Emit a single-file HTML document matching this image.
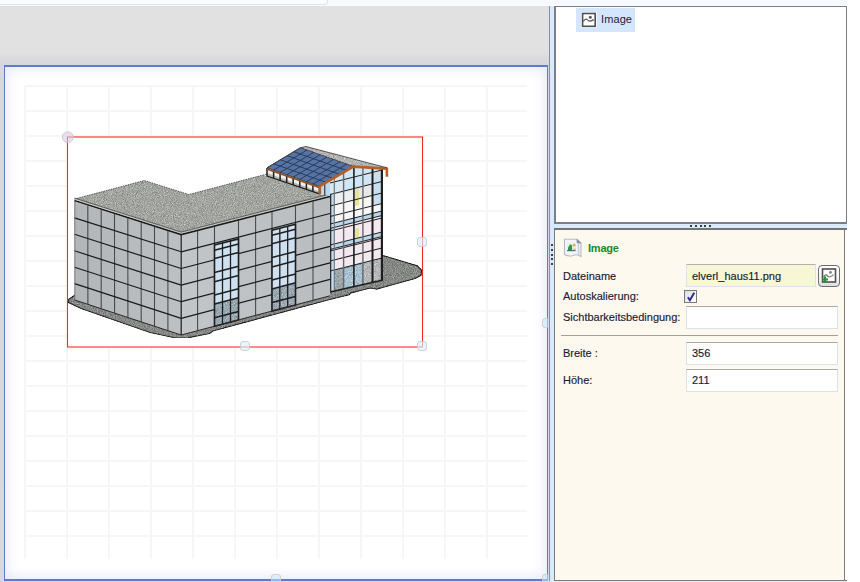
<!DOCTYPE html>
<html><head><meta charset="utf-8">
<style>
*{margin:0;padding:0;box-sizing:border-box}
html,body{width:860px;height:582px;overflow:hidden;background:#fff;font-family:"Liberation Sans",sans-serif;}
.a{position:absolute}
.lbl{position:absolute;font-size:11px;color:#1a1a36;white-space:nowrap;letter-spacing:0px;-webkit-text-stroke:0.15px #1a1a36}
.inp{position:absolute;background:#fff;border:1px solid #dbe1ea;border-top-color:#a8a8a8}
</style></head><body>
<!-- top strip -->
<div class="a" style="left:0;top:0;width:847px;height:6px;background:#f6f9fd"></div>
<div class="a" style="left:-4px;top:-4px;width:332px;height:9px;background:#fafcff;border:1px solid #e2defa;border-radius:0 0 3px 3px"></div>
<div class="a" style="left:0;top:5px;width:847px;height:1px;background:#fbfcfe"></div>
<!-- gray workspace -->
<div class="a" style="left:0;top:6px;width:549px;height:576px;background:#e1e1e1"></div>
<div class="a" style="left:0;top:52px;width:549px;height:530px;background:linear-gradient(#e1e1e1,#d6d6dc 13px,#d8d8de)"></div>
<!-- canvas -->
<div class="a" style="left:4px;top:65px;width:544px;height:516px;border:2px solid #5f7ad0;border-left-width:1px;border-right-width:1px;background:#fff;box-shadow:inset 0 0 12px 3px #eaeafa"></div>
<div style="position:absolute;left:24px;top:86px;width:2px;height:473px;background:#f6f6f6"></div>
<div style="position:absolute;left:66px;top:86px;width:2px;height:473px;background:#f6f6f6"></div>
<div style="position:absolute;left:108px;top:86px;width:2px;height:473px;background:#f6f6f6"></div>
<div style="position:absolute;left:150px;top:86px;width:2px;height:473px;background:#f6f6f6"></div>
<div style="position:absolute;left:192px;top:86px;width:2px;height:473px;background:#f6f6f6"></div>
<div style="position:absolute;left:234px;top:86px;width:2px;height:473px;background:#f6f6f6"></div>
<div style="position:absolute;left:276px;top:86px;width:2px;height:473px;background:#f6f6f6"></div>
<div style="position:absolute;left:318px;top:86px;width:2px;height:473px;background:#f6f6f6"></div>
<div style="position:absolute;left:360px;top:86px;width:2px;height:473px;background:#f6f6f6"></div>
<div style="position:absolute;left:402px;top:86px;width:2px;height:473px;background:#f6f6f6"></div>
<div style="position:absolute;left:444px;top:86px;width:2px;height:473px;background:#f6f6f6"></div>
<div style="position:absolute;left:486px;top:86px;width:2px;height:473px;background:#f6f6f6"></div>
<div style="position:absolute;left:25px;top:85px;width:502px;height:2px;background:#f6f6f6"></div>
<div style="position:absolute;left:25px;top:110px;width:502px;height:2px;background:#f6f6f6"></div>
<div style="position:absolute;left:25px;top:135px;width:502px;height:2px;background:#f6f6f6"></div>
<div style="position:absolute;left:25px;top:160px;width:502px;height:2px;background:#f6f6f6"></div>
<div style="position:absolute;left:25px;top:185px;width:502px;height:2px;background:#f6f6f6"></div>
<div style="position:absolute;left:25px;top:210px;width:502px;height:2px;background:#f6f6f6"></div>
<div style="position:absolute;left:25px;top:235px;width:502px;height:2px;background:#f6f6f6"></div>
<div style="position:absolute;left:25px;top:260px;width:502px;height:2px;background:#f6f6f6"></div>
<div style="position:absolute;left:25px;top:285px;width:502px;height:2px;background:#f6f6f6"></div>
<div style="position:absolute;left:25px;top:310px;width:502px;height:2px;background:#f6f6f6"></div>
<div style="position:absolute;left:25px;top:335px;width:502px;height:2px;background:#f6f6f6"></div>
<div style="position:absolute;left:25px;top:360px;width:502px;height:2px;background:#f6f6f6"></div>
<div style="position:absolute;left:25px;top:385px;width:502px;height:2px;background:#f6f6f6"></div>
<div style="position:absolute;left:25px;top:410px;width:502px;height:2px;background:#f6f6f6"></div>
<div style="position:absolute;left:25px;top:435px;width:502px;height:2px;background:#f6f6f6"></div>
<div style="position:absolute;left:25px;top:460px;width:502px;height:2px;background:#f6f6f6"></div>
<div style="position:absolute;left:25px;top:485px;width:502px;height:2px;background:#f6f6f6"></div>
<div style="position:absolute;left:25px;top:510px;width:502px;height:2px;background:#f6f6f6"></div>
<div style="position:absolute;left:25px;top:535px;width:502px;height:2px;background:#f6f6f6"></div>
<!-- selection -->
<svg class="a" style="left:0;top:0" width="860" height="582" viewBox="0 0 860 582">
<defs>
<filter id="spk" x="0" y="0" width="100%" height="100%" color-interpolation-filters="sRGB">
<feTurbulence type="fractalNoise" baseFrequency="1.1" numOctaves="2" seed="3" result="n"/>
<feColorMatrix in="n" type="matrix" values="1 0 0 0 0  1 0 0 0 0  1 0 0 0 0  0 0 0 0 1" result="g"/>
<feComposite in="SourceGraphic" in2="g" operator="arithmetic" k1="0" k2="1" k3="0.45" k4="-0.225" result="m"/>
<feComposite in="m" in2="SourceAlpha" operator="in"/>
</filter>
<linearGradient id="gl" x1="0" y1="0" x2="1" y2="0"><stop offset="0" stop-color="#b2b6b9"/><stop offset="1" stop-color="#bcc0c3"/></linearGradient>
<linearGradient id="gf" x1="0" y1="0" x2="1" y2="0"><stop offset="0" stop-color="#c3c6c9"/><stop offset="1" stop-color="#b9bdc0"/></linearGradient>
</defs>
<rect x="67" y="137" width="356" height="210" fill="#fff"/>
<polygon points="74.7,295.2 68.4,299.5 68.6,302.5 81.0,308.5 150.0,332.5 176.0,338.0 188.0,337.8 209.6,333.5 213.0,331.0 330.0,299.5 349.4,294.6 350.5,293.1 370.3,288.0 376.6,289.2 415.3,278.5 421.1,275.3 421.6,270.1 417.4,265.9 382.9,255.5 330.0,262.0 181.0,300.0" fill="#868886" stroke="#2a2a2a" stroke-width="1.2" filter="url(#spk)"/>
<polygon points="74.5,201.5 181.2,235.2 181.2,335.0 74.6,300.0" fill="url(#gl)"/>
<line x1="87.8" y1="205.7" x2="87.9" y2="304.4" stroke="#4a4a4a" stroke-width="1.1"/>
<line x1="101.2" y1="209.9" x2="101.2" y2="308.8" stroke="#4a4a4a" stroke-width="1.1"/>
<line x1="114.5" y1="214.1" x2="114.6" y2="313.1" stroke="#4a4a4a" stroke-width="1.1"/>
<line x1="127.8" y1="218.3" x2="127.9" y2="317.5" stroke="#4a4a4a" stroke-width="1.1"/>
<line x1="141.2" y1="222.6" x2="141.2" y2="321.9" stroke="#4a4a4a" stroke-width="1.1"/>
<line x1="154.5" y1="226.8" x2="154.5" y2="326.2" stroke="#4a4a4a" stroke-width="1.1"/>
<line x1="167.9" y1="231.0" x2="167.9" y2="330.6" stroke="#4a4a4a" stroke-width="1.1"/>
<line x1="74.5" y1="217.9" x2="181.2" y2="251.8" stroke="#1a1a1a" stroke-width="1.2"/>
<line x1="74.5" y1="234.3" x2="181.2" y2="268.5" stroke="#1a1a1a" stroke-width="1.2"/>
<line x1="74.5" y1="250.8" x2="181.2" y2="285.1" stroke="#1a1a1a" stroke-width="1.2"/>
<line x1="74.6" y1="267.2" x2="181.2" y2="301.7" stroke="#1a1a1a" stroke-width="1.2"/>
<line x1="74.6" y1="283.6" x2="181.2" y2="318.4" stroke="#1a1a1a" stroke-width="1.2"/>
<polygon points="181.2,235.2 330.0,197.0 330.0,295.8 181.2,335.0" fill="url(#gf)"/>
<line x1="197.6" y1="231.0" x2="197.6" y2="330.7" stroke="#4a4a4a" stroke-width="1.1"/>
<line x1="214.5" y1="226.7" x2="214.5" y2="326.2" stroke="#4a4a4a" stroke-width="1.1"/>
<line x1="238.5" y1="220.5" x2="238.5" y2="319.9" stroke="#4a4a4a" stroke-width="1.1"/>
<line x1="255.6" y1="216.1" x2="255.6" y2="315.4" stroke="#4a4a4a" stroke-width="1.1"/>
<line x1="272.0" y1="211.9" x2="272.0" y2="311.1" stroke="#4a4a4a" stroke-width="1.1"/>
<line x1="295.5" y1="205.9" x2="295.5" y2="304.9" stroke="#4a4a4a" stroke-width="1.1"/>
<line x1="313.0" y1="201.4" x2="313.0" y2="300.3" stroke="#4a4a4a" stroke-width="1.1"/>
<line x1="181.2" y1="251.8" x2="330.0" y2="213.5" stroke="#1a1a1a" stroke-width="1.2"/>
<line x1="181.2" y1="268.5" x2="330.0" y2="229.9" stroke="#1a1a1a" stroke-width="1.2"/>
<line x1="181.2" y1="285.1" x2="330.0" y2="246.4" stroke="#1a1a1a" stroke-width="1.2"/>
<line x1="181.2" y1="301.7" x2="330.0" y2="262.9" stroke="#1a1a1a" stroke-width="1.2"/>
<line x1="181.2" y1="318.4" x2="330.0" y2="279.3" stroke="#1a1a1a" stroke-width="1.2"/>
<polygon points="214.5,245.1 238.5,238.9 238.5,319.9 214.5,326.2" fill="#cfe1f0"/>
<polygon points="214.5,304.0 238.5,297.7 238.5,319.9 214.5,326.2" fill="#9aa8b2" filter="url(#spk)"/>
<line x1="222.5" y1="243.0" x2="222.5" y2="324.1" stroke="#1e1e1e" stroke-width="1.3"/>
<line x1="230.5" y1="240.9" x2="230.5" y2="322.0" stroke="#1e1e1e" stroke-width="1.3"/>
<line x1="214.5" y1="250.2" x2="238.5" y2="244.0" stroke="#1e1e1e" stroke-width="1.5"/>
<line x1="214.5" y1="258.6" x2="238.5" y2="252.4" stroke="#1e1e1e" stroke-width="1.5"/>
<line x1="214.5" y1="272.4" x2="238.5" y2="266.2" stroke="#1e1e1e" stroke-width="1.5"/>
<line x1="214.5" y1="281.8" x2="238.5" y2="275.6" stroke="#1e1e1e" stroke-width="1.5"/>
<line x1="214.5" y1="295.1" x2="238.5" y2="288.8" stroke="#1e1e1e" stroke-width="1.5"/>
<line x1="214.5" y1="304.0" x2="238.5" y2="297.7" stroke="#1e1e1e" stroke-width="1.5"/>
<line x1="214.5" y1="317.7" x2="238.5" y2="311.4" stroke="#1e1e1e" stroke-width="1.5"/>
<polygon points="214.5,245.1 238.5,238.9 238.5,319.9 214.5,326.2" fill="none" stroke="#1e1e1e" stroke-width="1.6"/>
<polygon points="272.0,230.2 295.5,224.2 295.5,304.9 272.0,311.1" fill="#cfe1f0"/>
<polygon points="272.0,288.9 295.5,282.8 295.5,304.9 272.0,311.1" fill="#9aa8b2" filter="url(#spk)"/>
<line x1="279.8" y1="228.2" x2="279.8" y2="309.0" stroke="#1e1e1e" stroke-width="1.3"/>
<line x1="287.7" y1="226.2" x2="287.7" y2="307.0" stroke="#1e1e1e" stroke-width="1.3"/>
<line x1="272.0" y1="235.3" x2="295.5" y2="229.3" stroke="#1e1e1e" stroke-width="1.5"/>
<line x1="272.0" y1="243.7" x2="295.5" y2="237.7" stroke="#1e1e1e" stroke-width="1.5"/>
<line x1="272.0" y1="257.5" x2="295.5" y2="251.4" stroke="#1e1e1e" stroke-width="1.5"/>
<line x1="272.0" y1="266.9" x2="295.5" y2="260.7" stroke="#1e1e1e" stroke-width="1.5"/>
<line x1="272.0" y1="280.0" x2="295.5" y2="273.9" stroke="#1e1e1e" stroke-width="1.5"/>
<line x1="272.0" y1="288.9" x2="295.5" y2="282.8" stroke="#1e1e1e" stroke-width="1.5"/>
<line x1="272.0" y1="302.6" x2="295.5" y2="296.4" stroke="#1e1e1e" stroke-width="1.5"/>
<polygon points="272.0,230.2 295.5,224.2 295.5,304.9 272.0,311.1" fill="none" stroke="#1e1e1e" stroke-width="1.6"/>
<line x1="74.8" y1="201" x2="74.8" y2="300" stroke="#666" stroke-width="0.8"/>
<line x1="181.2" y1="235" x2="181.2" y2="335" stroke="#1e1e1e" stroke-width="1.2"/>
<polyline points="74.6,300.0 181.2,335.0 330.0,295.8" stroke="#2a2a2a" stroke-width="1" fill="none"/>
<polygon points="74.5,199.0 144.3,180.5 188.8,194.5 263.0,175.0 330.0,194.0 330.0,197.0 181.2,233.8" fill="#a2a4a0" filter="url(#spk)"/>
<polyline points="74.5,200.6 181.2,234.6 330.0,196.5" stroke="#1a1a1a" stroke-width="1.6" fill="none"/>
<polyline points="74.5,199.1 181.2,233.1 330.0,195.1" stroke="#c6c6c6" stroke-width="1" fill="none"/>
<polyline points="74.5,198.0 181.2,232.0 330.0,194.0" stroke="#505050" stroke-width="0.8" fill="none"/>
<polyline points="74.5,199.0 144.3,180.5 188.8,194.5 267.0,174.0" stroke="#555" stroke-width="0.9" fill="none" stroke-dasharray="1.5 1"/>
<polygon points="267.0,168.0 319.5,186.4 319.5,193.8 267.0,176.0" fill="#b8b8b8"/>
<polygon points="267.0,170.0 319.5,188.4 319.5,191.5 267.0,173.0" fill="#f0f0f0"/>
<line x1="267.0" y1="168.0" x2="267.0" y2="176.0" stroke="#1e1e1e" stroke-width="1.5"/>
<line x1="273.6" y1="170.3" x2="273.6" y2="178.2" stroke="#1e1e1e" stroke-width="1.5"/>
<line x1="280.1" y1="172.6" x2="280.1" y2="180.4" stroke="#1e1e1e" stroke-width="1.5"/>
<line x1="286.7" y1="174.9" x2="286.7" y2="182.7" stroke="#1e1e1e" stroke-width="1.5"/>
<line x1="293.2" y1="177.2" x2="293.2" y2="184.9" stroke="#1e1e1e" stroke-width="1.5"/>
<line x1="299.8" y1="179.5" x2="299.8" y2="187.1" stroke="#1e1e1e" stroke-width="1.5"/>
<line x1="306.4" y1="181.8" x2="306.4" y2="189.4" stroke="#1e1e1e" stroke-width="1.5"/>
<line x1="312.9" y1="184.1" x2="312.9" y2="191.6" stroke="#1e1e1e" stroke-width="1.5"/>
<line x1="319.5" y1="186.4" x2="319.5" y2="193.8" stroke="#1e1e1e" stroke-width="1.5"/>
<line x1="267" y1="176" x2="319.5" y2="193.8" stroke="#1e1e1e" stroke-width="1.3"/>
<clipPath id="atc"><polygon points="319.8,186.0 353.3,166.4 382.5,168.2 382.5,280.0 330.0,291.5 330.0,196.0 319.8,194.2"/></clipPath>
<g clip-path="url(#atc)">
<polygon points="319.8,186.0 353.3,166.4 382.5,168.2 382.5,280.0 330.0,291.5 330.0,196.0 319.8,194.2" fill="#eeeff1"/>
<polygon points="318.0,208.0 384.0,191.5 384.0,210.5 318.0,227.0" fill="#f7f7f8" />
<polygon points="318.0,231.0 384.0,214.5 384.0,231.5 318.0,248.0" fill="#f5e9f1" />
<polygon points="318.0,252.0 384.0,235.5 384.0,255.5 318.0,272.0" fill="#f4e8f0" />
<polygon points="318.0,227.0 384.0,210.5 384.0,215.0 318.0,231.5" fill="#b9d6ea" />
<polygon points="318.0,248.0 384.0,231.5 384.0,236.0 318.0,252.5" fill="#b9d6ea" />
<polygon points="318.0,274.0 384.0,257.5 384.0,278.5 318.0,295.0" fill="#9ea6aa" filter="url(#spk)"/>
<polygon points="343.6,268.6 362.9,263.8 362.9,285.8 343.6,290.6" fill="#a9c2d2" filter="url(#spk)"/>
<polygon points="362.9,262.8 383.0,257.8 383.0,278.8 362.9,283.8" fill="#b4b6b8" filter="url(#spk)"/>
<polygon points="318.0,153.0 384.0,136.5 384.0,182.5 318.0,199.0" fill="#d2e7f5" />
<polygon points="330.0,150.0 345.0,146.2 345.0,192.2 330.0,196.0" fill="#d6e9f5" />
<polygon points="372.0,173.5 383.0,170.8 383.0,202.8 372.0,205.5" fill="#c8e0f0" />
<polygon points="372.0,139.5 384.0,136.5 384.0,170.5 372.0,173.5" fill="#e6e6e8" />
<polygon points="353.9,188.5 372.0,184.0 372.0,195.5 353.9,200.0" fill="#e8e8ea" />
<polygon points="355.0,190.0 359.0,189.0 359.0,205.0 355.0,206.0" fill="#e6e29a"/>
<polygon points="355.0,229.0 359.0,228.0 359.0,237.0 355.0,238.0" fill="#e6e29a"/>
<polygon points="330.0,196.0 334.0,195.0 334.0,292.0 330.0,292.0" fill="#c6dff0"/>
<line x1="318" y1="186.0" x2="384" y2="169.5" stroke="#1e1e1e" stroke-width="1.2"/>
<line x1="318" y1="197.5" x2="384" y2="181.0" stroke="#1e1e1e" stroke-width="1.2"/>
<line x1="318" y1="209.0" x2="384" y2="192.5" stroke="#1e1e1e" stroke-width="1.2"/>
<line x1="318" y1="219.5" x2="384" y2="203.0" stroke="#1e1e1e" stroke-width="1.2"/>
<line x1="318" y1="227.0" x2="384" y2="210.5" stroke="#1e1e1e" stroke-width="1.2"/>
<line x1="318" y1="231.5" x2="384" y2="215.0" stroke="#1e1e1e" stroke-width="1.2"/>
<line x1="318" y1="234.0" x2="384" y2="217.5" stroke="#1e1e1e" stroke-width="1.2"/>
<line x1="318" y1="248.0" x2="384" y2="231.5" stroke="#1e1e1e" stroke-width="1.2"/>
<line x1="318" y1="252.5" x2="384" y2="236.0" stroke="#1e1e1e" stroke-width="1.2"/>
<line x1="318" y1="254.0" x2="384" y2="237.5" stroke="#1e1e1e" stroke-width="1.2"/>
<line x1="318" y1="264.0" x2="384" y2="247.5" stroke="#1e1e1e" stroke-width="1.2"/>
<line x1="318" y1="274.0" x2="384" y2="257.5" stroke="#1e1e1e" stroke-width="1.2"/>
</g>
<line x1="330.7" y1="194.0" x2="330.7" y2="291.3" stroke="#1e1e1e" stroke-width="1.2"/>
<line x1="334.3" y1="177.5" x2="334.3" y2="290.6" stroke="#777" stroke-width="1.2"/>
<line x1="343.6" y1="172.1" x2="343.6" y2="288.5" stroke="#6a6a6a" stroke-width="1.4"/>
<line x1="353.9" y1="166.4" x2="353.9" y2="286.3" stroke="#1e1e1e" stroke-width="1.6"/>
<line x1="362.9" y1="167.0" x2="362.9" y2="284.3" stroke="#6a6a6a" stroke-width="1.4"/>
<line x1="372.5" y1="167.6" x2="372.5" y2="282.2" stroke="#1e1e1e" stroke-width="2"/>
<line x1="381.9" y1="168.2" x2="381.9" y2="280.1" stroke="#1e1e1e" stroke-width="2.2"/>
<line x1="330" y1="292" x2="383" y2="280" stroke="#1e1e1e" stroke-width="1.6"/>
<polygon points="319.8,186.5 330.0,181.0 330.0,196.0 319.8,194.2" fill="#bcd8ec"/>
<line x1="324.8" y1="184" x2="324.8" y2="195.5" stroke="#1e1e1e" stroke-width="1"/>
<polygon points="300.4,147.7 306.0,146.5 387.0,167.8 353.3,166.4" fill="#b2b3b2" filter="url(#spk)"/>
<polygon points="267.0,167.8 300.4,147.7 353.3,166.4 319.5,186.4" fill="#5574a6"/>
<line x1="273.6" y1="170.1" x2="307.0" y2="150.0" stroke="#2a3856" stroke-width="0.95"/>
<line x1="280.1" y1="172.5" x2="313.6" y2="152.4" stroke="#2a3856" stroke-width="0.95"/>
<line x1="286.7" y1="174.8" x2="320.2" y2="154.7" stroke="#2a3856" stroke-width="0.95"/>
<line x1="293.2" y1="177.1" x2="326.9" y2="157.1" stroke="#2a3856" stroke-width="0.95"/>
<line x1="299.8" y1="179.4" x2="333.5" y2="159.4" stroke="#2a3856" stroke-width="0.95"/>
<line x1="306.4" y1="181.8" x2="340.1" y2="161.7" stroke="#2a3856" stroke-width="0.95"/>
<line x1="312.9" y1="184.1" x2="346.7" y2="164.1" stroke="#2a3856" stroke-width="0.95"/>
<line x1="273.7" y1="163.8" x2="326.3" y2="182.4" stroke="#2a3856" stroke-width="0.95"/>
<line x1="280.4" y1="159.8" x2="333.0" y2="178.4" stroke="#2a3856" stroke-width="0.95"/>
<line x1="287.0" y1="155.7" x2="339.8" y2="174.4" stroke="#2a3856" stroke-width="0.95"/>
<line x1="293.7" y1="151.7" x2="346.5" y2="170.4" stroke="#2a3856" stroke-width="0.95"/>
<polygon points="267.0,167.8 300.4,147.7 353.3,166.4 319.5,186.4" fill="none" stroke="#222" stroke-width="0.7"/>
<polyline points="267.0,169.0 319.5,187.4" stroke="#9a5020" stroke-width="1.6" fill="none"/>
<polyline points="319.8,194.5 319.8,186.2 353.3,166.6 386.9,168.6 386.9,176.7" stroke="#b45e24" stroke-width="2.6" fill="none"/>
<polyline points="267.0,167.8 300.4,147.7 306.0,146.5 387.0,167.8" stroke="#3a3a3a" stroke-width="0.8" fill="none"/>
<rect x="67.5" y="137" width="355" height="210" fill="none" stroke="#ff2424" stroke-width="1.05"/>
<circle cx="67.8" cy="137.2" r="5.5" fill="#dcc8e8" fill-opacity="0.6" stroke="#c8c8c8" stroke-width="0.8"/>
<rect x="417.5" y="237.5" width="9" height="9" rx="2.5" fill="#d6f2fc" fill-opacity="0.65" stroke="#c8c8c8" stroke-width="0.8"/>
<rect x="240.5" y="341.5" width="9" height="9" rx="2.5" fill="#d6f2fc" fill-opacity="0.65" stroke="#c8c8c8" stroke-width="0.8"/>
<rect x="417.5" y="341.5" width="9" height="9" rx="2.5" fill="#d6f2fc" fill-opacity="0.65" stroke="#c8c8c8" stroke-width="0.8"/>
<rect x="542.5" y="318.5" width="9" height="9" rx="2.5" fill="#c8e8fb" fill-opacity="0.55" stroke="#c8c8c8" stroke-width="0.8"/>
<rect x="271.5" y="574.5" width="9" height="9" rx="2.5" fill="#c8e8fb" fill-opacity="0.55" stroke="#c8c8c8" stroke-width="0.8"/>
<rect x="542.5" y="574.5" width="9" height="9" rx="2.5" fill="#c8e8fb" fill-opacity="0.55" stroke="#c8c8c8" stroke-width="0.8"/>
</svg>
<!-- splitter vertical -->
<div class="a" style="left:549px;top:6px;width:1px;height:575px;background:#8c8f96"></div>
<div class="a" style="left:550px;top:6px;width:4px;height:576px;background:#d8eafb"></div>
<!-- top panel -->
<div class="a" style="left:554px;top:6px;width:293px;height:218px;background:#fff;border:1px solid #7b7f87;border-left-width:2px;border-bottom-width:2px"></div>
<div class="a" style="left:576px;top:8px;width:59px;height:24px;background:#d3e6fb"></div>
<svg class="a" style="left:580px;top:11px" width="18" height="18" viewBox="0 0 18 18">
<rect x="1" y="1" width="16" height="16" fill="#fff" opacity="0.8"/>
<rect x="2.6" y="2.5" width="12.6" height="12.8" fill="#fff" stroke="#4e4e4e" stroke-width="1.6"/>
<path d="M3.2 10.4 Q5.2 7.6 6.6 8.2 Q8 9 9 10 Q10.5 10.5 13.8 8.6" fill="none" stroke="#5a5a5a" stroke-width="1.3"/>
<circle cx="10.3" cy="6.3" r="1.5" fill="#5a5a5a"/>
</svg>
<div class="a" style="left:601px;top:12.6px;font-size:11px;color:#1c1c3a;letter-spacing:0.1px">Image</div>
<!-- horizontal splitter -->
<div class="a" style="left:554px;top:224px;width:293px;height:4px;background:#d8eafb"></div>
<!-- bottom panel -->
<div class="a" style="left:554px;top:228px;width:291px;height:353px;background:#fdf9ee;border:1px solid #7a7a7a;border-top-width:2px;border-left-width:1px"></div>
<div class="a" style="left:554px;top:228px;width:293px;height:2px;background:#747474"></div>
<div class="a" style="left:554px;top:580px;width:293px;height:1px;background:#7a7a7a"></div>
<div class="a" style="left:555px;top:581px;width:292px;height:1px;background:#e3effb"></div>
<div class="a" style="left:551px;top:244.0px;width:2px;height:2px;background:#3c3c3c"></div>
<div class="a" style="left:690.0px;top:225px;width:2px;height:2px;background:#3c3c3c"></div>
<div class="a" style="left:551px;top:248.8px;width:2px;height:2px;background:#3c3c3c"></div>
<div class="a" style="left:694.8px;top:225px;width:2px;height:2px;background:#3c3c3c"></div>
<div class="a" style="left:551px;top:253.5px;width:2px;height:2px;background:#3c3c3c"></div>
<div class="a" style="left:699.6px;top:225px;width:2px;height:2px;background:#3c3c3c"></div>
<div class="a" style="left:551px;top:258.2px;width:2px;height:2px;background:#3c3c3c"></div>
<div class="a" style="left:704.4px;top:225px;width:2px;height:2px;background:#3c3c3c"></div>
<div class="a" style="left:551px;top:263.0px;width:2px;height:2px;background:#3c3c3c"></div>
<div class="a" style="left:709.2px;top:225px;width:2px;height:2px;background:#3c3c3c"></div>

<svg class="a" style="left:563px;top:238px" width="20" height="20" viewBox="0 0 20 20">
<path d="M1.5 1.2 H14 L18 5 V18.5 Q14 15.5 10 17.5 Q6 19 1.5 16.5 Z" fill="#f2f4fa" stroke="#b4bccb" stroke-width="1.1"/>
<path d="M14 1.2 V5 H18 Z" fill="#8a96aa" stroke="#8a96aa" stroke-width="0.8"/>
<path d="M15.5 6 V17" stroke="#c8cedc" stroke-width="1.5"/>
<rect x="4" y="5" width="8.5" height="7.5" fill="#e6eef8"/>
<path d="M9 12.5 L12.5 10 V12.5 Z" fill="#d4b464"/>
<circle cx="11.2" cy="7.2" r="1.4" fill="#e0b040"/>
<path d="M5 12.5 Q4.5 9 6 8 Q6.5 6 8 6.5 Q9.8 7.5 9 9.5 Q9.8 11 8.5 12.5 Z" fill="#2c9a2c"/>
<path d="M4 12.7 H12.5" stroke="#3a4a5a" stroke-width="0.9"/>
</svg>
<div class="a" style="left:588px;top:242px;font-size:11px;font-weight:bold;color:#1a8a1a;letter-spacing:-0.2px">Image</div>
<div class="lbl" style="left:563px;top:270px">Dateiname</div>
<div class="a" style="left:686px;top:264px;width:130px;height:23px;background:#f7f7d6;border:1px solid #dde3ec;border-top-color:#b0b0b0"></div>
<div class="lbl" style="left:692px;top:270px">elverl_haus11.png</div>
<div class="a" style="left:818px;top:265px;width:22px;height:22px;border:1px solid #6e6e6e;border-radius:4px;background:linear-gradient(#fff,#f2f2f2 70%,#dcdcdc)"></div>
<svg class="a" style="left:818px;top:265px" width="22" height="22" viewBox="0 0 22 22">
<rect x="4.5" y="4" width="13" height="13" fill="#fff" stroke="#505050" stroke-width="1.6"/>
<path d="M5.5 12 Q7 9.5 8.5 10 Q10 11.8 11.3 12 Q13 11.8 15.6 9.6" fill="none" stroke="#7a7a7a" stroke-width="1.2"/>
<circle cx="12.5" cy="7.4" r="1.3" fill="#7a7a7a"/>
<path d="M7 11.5 V17.5 M4 14.5 H10" stroke="#2a9030" stroke-width="2.2"/>
</svg>
<div class="lbl" style="left:563px;top:290px">Autoskalierung:</div>
<div class="a" style="left:684px;top:290px;width:13px;height:13px;border:1.5px solid #7a7a7a;background:linear-gradient(135deg,#d8dce2,#fff)"></div>
<svg class="a" style="left:684px;top:290px" width="13" height="13" viewBox="0 0 13 13"><path d="M3.9 7.2 L5.9 10.2 L10.2 2.8" fill="none" stroke="#2b2b8c" stroke-width="2"/></svg>
<div class="lbl" style="left:563px;top:311px">Sichtbarkeitsbedingung:</div>
<div class="inp" style="left:686px;top:306px;width:152px;height:23px"></div>
<div class="a" style="left:561px;top:335px;width:277px;height:1px;background:#a0a0a0"></div>
<div class="lbl" style="left:563px;top:347px">Breite :</div>
<div class="inp" style="left:686px;top:342px;width:152px;height:23px"></div>
<div class="lbl" style="left:692px;top:347px">356</div>
<div class="lbl" style="left:563px;top:374px">Höhe:</div>
<div class="inp" style="left:686px;top:369px;width:152px;height:23px"></div>
<div class="lbl" style="left:692px;top:374px">211</div>
</body></html>
